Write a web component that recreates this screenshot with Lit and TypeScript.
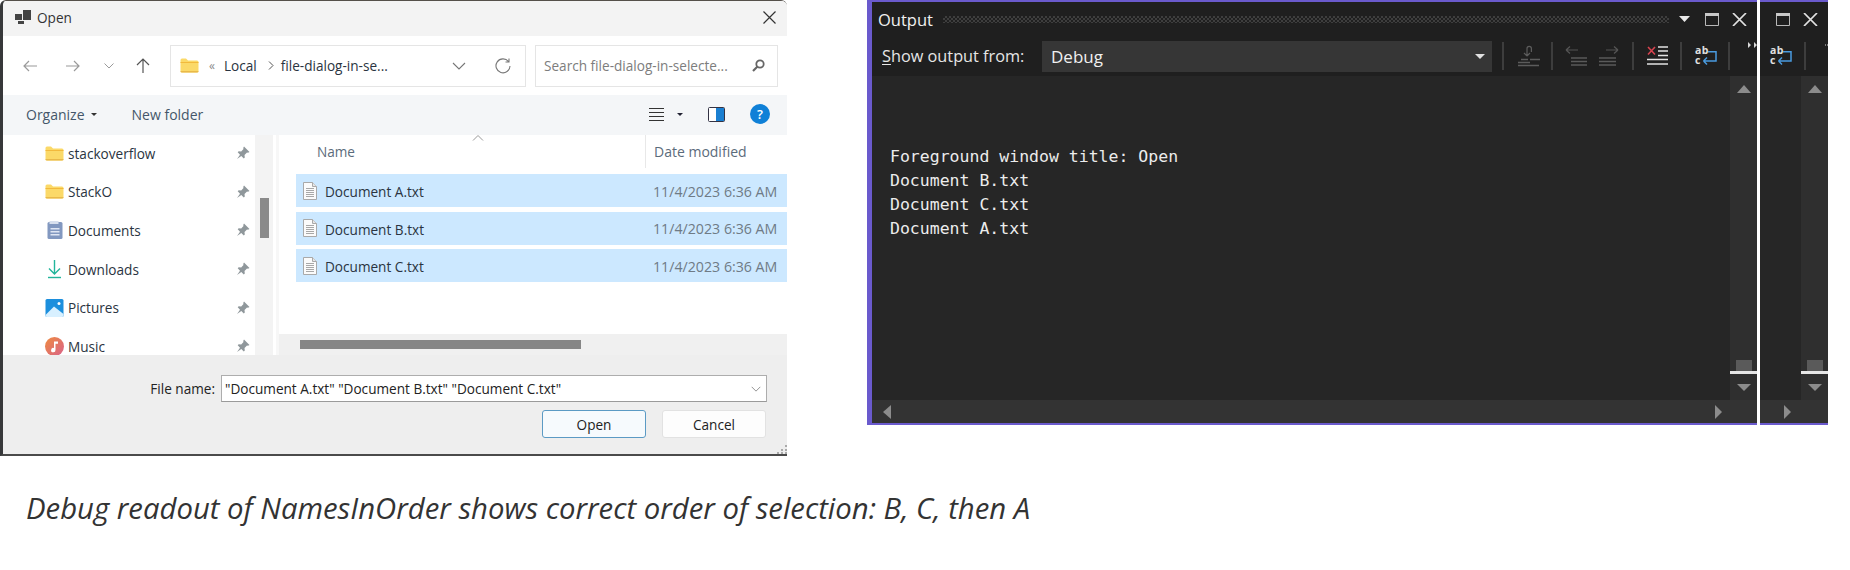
import { LitElement, html, css } from "lit";
import { customElement, property } from "lit/decorators.js";

const folder = html`<svg class="ic" width="18" height="15" viewBox="0 0 18 15"><path d="M0 2q0-1.500 1.500-1.500h4l2 2h9q1.500 0 1.500 1.500v9q0 1.500-1.500 1.500h-15q-1.500 0-1.500-1.500z" fill="#fbd968"/><path d="M0 4h18v1H0z" fill="#f2b93c"/><path d="M0 13h18v.600q0 1-1.500 1h-15q-1.500 0-1.500-1z" fill="#e9b94a"/></svg>`;
const pin = html`<svg class="pin" width="14" height="14" viewBox="0 0 14 14"><path d="M8 .5l5.500 5.500-1.500.800-1 -.300-2.500 2.500.300 2.500-1 1-2.500-2.500L1 13l3-4.300L1.700 6.200l1-1 2.500.300L7.500 3 7.200 2z" fill="#8f979b"/></svg>`;
const docs = html`<svg class="ic" width="18" height="18" viewBox="0 0 18 18"><rect x="2" y="1" width="15" height="17" rx="1.500" fill="#8298c0"/><rect x="4" y="0" width="9" height="3" fill="#d8e0ee"/><path d="M5 7h9v1.500H5zM5 10h9v1.500H5zM5 13h9v1.500H5z" fill="#dfe6f3"/></svg>`;
const down = html`<svg class="ic" width="18" height="20" viewBox="0 0 18 20"><path d="M9 1v14M3.500 9.500L9 15l5.500-5.500" fill="none" stroke="#22b59b" stroke-width="1.400"/><path d="M2.500 18.500h13" stroke="#22b59b" stroke-width="1.400"/></svg>`;
const pics = html`<svg class="ic" width="18" height="18" viewBox="0 0 18 18"><rect width="18" height="18" rx="1.500" fill="#1c8fdd"/><path d="M0 16l8.500-8.500L18 15v1.500q0 1.500-1.500 1.500h-15Q0 18 0 16.500z" fill="#d8f0ff"/><circle cx="13.500" cy="4.500" r="1.500" fill="#fff"/></svg>`;
const music = html`<svg class="ic" width="19" height="19" viewBox="0 0 19 19"><defs><linearGradient id="mg" x1="0" y1="0" x2="1" y2="1"><stop offset="0" stop-color="#ee8b3f"/><stop offset="1" stop-color="#d9628a"/></linearGradient></defs><circle cx="9.500" cy="9.500" r="9.500" fill="url(#mg)"/><path d="M9 4.500h4v2.300h-2.500v6.200a2.200 2.200 0 1 1-1.500-2z" fill="#fff"/></svg>`;
const doc = html`<svg class="fi" width="14" height="18" viewBox="0 0 14 18"><path d="M.5.500h9l4 4v13H.5z" fill="#fbfbfb" stroke="#a9a9a9"/><path d="M9.500.500v4h4" fill="#e6e6e6" stroke="#a9a9a9"/><path d="M3 6.500h8M3 8.500h8M3 10.500h8M3 12.500h8M3 14.500h8" stroke="#a8a8a8"/></svg>`;
const chev = (c = "#8a8a8a", w = 14) => html`<svg width="${w}" height="8" viewBox="0 0 14 8"><path d="M1 1l6 6 6-6" fill="none" stroke="${c}" stroke-width="1.100"/></svg>`;
const tri = (c: string, w: number, h: number, d: "u" | "d" | "l" | "r") => {
  const p = d === "u" ? `M0 ${h}L${w / 2} 0L${w} ${h}z` : d === "d" ? `M0 0L${w} 0L${w / 2} ${h}z` : d === "l" ? `M${w} 0V${h}L0 ${h / 2}z` : `M0 0V${h}L${w} ${h / 2}z`;
  return html`<svg width="${w}" height="${h}" viewBox="0 0 ${w} ${h}"><path d="${p}" fill="${c}"/></svg>`;
};
const winMax = html`<svg width="14" height="13" viewBox="0 0 14 13"><path d="M.5.500h13v12H.5z" fill="none" stroke="#b8b8b8"/><path d="M0 0h14v3H0z" fill="#c8c8c8"/></svg>`;
const winX = html`<svg width="15" height="13" viewBox="0 0 15 13"><path d="M1 0l13 13M14 0L1 13" stroke="#e2e2e2" stroke-width="1.700"/></svg>`;
const wrapIc = html`<svg width="24" height="22" viewBox="0 0 24 22"><path d="M4 14.500h7M13 14.500h10" stroke="#5c5c5c" stroke-width="1.300"/><path d="M10 11V3.500a2.200 2.200 0 0 1 4.400 0V7M10 11l-3-3M10 11l3-3" fill="none" stroke="#5c5c5c" stroke-width="1.200"/><path d="M1 17.500h12M1 20.500h21" stroke="#5c5c5c" stroke-width="1.700"/></svg>`;
const goL = html`<svg width="22" height="20" viewBox="0 0 22 20"><path d="M1 4h12M1 4l4-3.500M1 4l4 3.500" fill="none" stroke="#555" stroke-width="1.200"/><path d="M6 12h16M6 15.500h16M6 19h16" stroke="#5a5a5a" stroke-width="1.700"/></svg>`;
const goR = html`<svg width="20" height="20" viewBox="0 0 20 20"><path d="M7 4h12M19 4l-4-3.500M19 4l-4 3.500" fill="none" stroke="#555" stroke-width="1.200"/><path d="M0 12h17M0 15.500h17M0 19h17" stroke="#5a5a5a" stroke-width="1.700"/></svg>`;
const clearIc = html`<svg width="22" height="21" viewBox="0 0 22 21"><path d="M1 1l7 7.500M8 1L1 8.500" stroke="#d8434f" stroke-width="1.600"/><path d="M11 1h10M11 5h10M11 9.500h10M0 13.500h21M0 18h21" stroke="#e2e2e2" stroke-width="1.500"/></svg>`;
const abcIc = html`<svg class="abc" width="23" height="22" viewBox="0 0 23 22"><text font-family="Open Sans" font-size="10.500" font-weight="700" letter-spacing=".5" fill="#e0e0e0"><tspan x="0" y="9.300">ab</tspan><tspan x="0" y="18.600">c</tspan></text><path d="M13 6.700h8v9.300H8.500M8.500 16l3.500-3.500M8.500 16l3.500 3.500" fill="none" stroke="#4a9bdf" stroke-width="1.500"/></svg>`;
const more = html`<svg class="more" width="9" height="6" viewBox="0 0 9 6"><path d="M0 0v6l3-3zM6 0v6l3-3z" fill="#d8d8d8"/></svg>`;

@customElement("output-panel")
class OutputPanel extends LitElement {
  @property({ type: Boolean }) stub = false;
  static styles = css`
    :host { display: flex; flex-direction: column; box-sizing: border-box; height: 425px; background: #1f1f1f; border-top: 2px solid #6a5acd; border-bottom: 2px solid #6a5acd; color: #f0f0f0; font-family: "Open Sans", sans-serif; flex: none; }
    .abc { overflow: visible; }
    .title { height: 34px; flex: none; display: flex; align-items: center; padding: 0 10px 0 6px; box-sizing: border-box; }
    .name { font-size: 16.500px; margin-right: 10px; }
    .grip { flex: 1; height: 7px; background-image: conic-gradient(#3e3e3e 25%, transparent 0 50%, #3e3e3e 0 75%, transparent 0); background-size: 4px 4px; margin-right: 10px; }
    .cap { margin-right: 15px; display: flex; }
    .max { margin-right: 13px; display: flex; }
    .x { display: flex; }
    .tools { height: 40px; flex: none; display: flex; align-items: center; box-sizing: border-box; padding-left: 10px; }
    .lab { font-size: 16.300px; width: 160px; flex: none; color: #e6e6e6; }
    .lab u { text-underline-offset: 2px; }
    .sel { width: 450px; height: 31px; flex: none; background: #363636; display: flex; align-items: center; justify-content: space-between; padding: 0 7px 0 9px; box-sizing: border-box; font-size: 17px; margin-right: 10px; }
    .sep { width: 2px; height: 28px; background: #3d3d3d; flex: none; }
    .t { display: flex; align-items: center; flex: none; }
    .more { align-self: flex-start; margin-top: 6px; }
    .main { flex: 1; display: flex; min-height: 0; }
    .text { flex: 1; background: #262626; font: 16.500px/24.100px "DejaVu Sans Mono", monospace; padding: 69px 0 0 18px; white-space: pre; color: #ececec; overflow: hidden; }
    .vs { width: 27px; flex: none; background: #2f2f2f; display: flex; flex-direction: column; align-items: center; }
    .vs .up { margin-top: 9px; display: flex; }
    .vs .thumb { margin-top: auto; width: 16px; height: 11px; background: #5a5a5a; }
    .vs .line { width: 100%; height: 3px; background: #e6e6e6; }
    .vs .dn { margin: 10px 0 9px; display: flex; }
    .hs { height: 23px; flex: none; background: #333; display: flex; align-items: center; justify-content: space-between; padding: 0 35px 0 11px; }
  `;
  render() {
    if (this.stub)
      return html`
        <div class="title"><span style="flex:1"></span><span class="max">${winMax}</span><span class="x">${winX}</span></div>
        <div class="tools"><span class="t" style="margin-right:11px">${abcIc}</span><span class="sep" style="margin-right:19px"></span>${more}</div>
        <div class="main"><div class="text" style="padding:0"></div>${this.bar()}</div>
        <div class="hs" style="padding-left:0;padding-right:37px;justify-content:flex-end">${tri("#8c8c8c", 7, 14, "r")}</div>`;
    return html`
      <div class="title"><span class="name">Output</span><span class="grip"></span><span class="cap">${tri("#e8e8e8", 11, 6, "d")}</span><span class="max">${winMax}</span><span class="x">${winX}</span></div>
      <div class="tools">
        <span class="lab"><u>S</u>how output from:</span>
        <div class="sel"><span>Debug</span>${tri("#e0e0e0", 10, 5, "d")}</div>
        <span class="sep" style="margin-right:13px"></span><span class="t" style="margin-right:10px">${wrapIc}</span>
        <span class="sep" style="margin-right:12px"></span><span class="t" style="margin-right:12px">${goL}</span><span class="t" style="margin-right:13px">${goR}</span>
        <span class="sep" style="margin-right:13px"></span><span class="t" style="margin-right:11px">${clearIc}</span>
        <span class="sep" style="margin-right:13px"></span><span class="t" style="margin-right:10px">${abcIc}</span>
        <span class="sep" style="margin-right:18px"></span>${more}
      </div>
      <div class="main"><div class="text">Foreground window title: Open
Document B.txt
Document C.txt
Document A.txt</div>${this.bar()}</div>
      <div class="hs">${tri("#8c8c8c", 8, 14, "l")}${tri("#8c8c8c", 7, 14, "r")}</div>`;
  }
  bar() {
    return html`<div class="vs"><span class="up">${tri("#8c8c8c", 14, 8, "u")}</span><span class="thumb"></span><span class="line"></span><span class="dn">${tri("#8c8c8c", 14, 7, "d")}</span></div>`;
  }
}

@customElement("open-dialog")
class OpenDialog extends LitElement {
  static styles = css`
    :host { display: flex; flex-direction: column; width: 787px; height: 456px; box-sizing: border-box; flex: none; border-left: 3px solid #37383a; border-top: 1px solid #55504a; border-bottom: 2px solid #4a4a4a; background: #fff; font-family: "Open Sans", sans-serif; color: #2a3441; font-size: 13.600px; overflow: hidden; border-top-left-radius: 6px; border-top-right-radius: 6px; }
    svg { flex: none; }
    .title { height: 35px; background: #f3f3f3; display: flex; align-items: center; padding: 0 11px 3px 12px; flex: none; color: #333; box-sizing: border-box; }
    .title span { flex: 1; margin-left: 6px; }
    .nav { height: 59px; display: flex; align-items: center; flex: none; box-sizing: border-box; padding-left: 20px; }
    .box { height: 42px; box-sizing: border-box; border: 1px solid #e5e5e5; display: flex; align-items: center; background: #fff; }
    .addr { width: 356px; margin: 0 9px 0 20px; padding: 0 14px 0 9px; }
    .search { width: 243px; padding: 0 12px 0 8px; color: #7d7d7d; justify-content: space-between; }
    .tb { height: 40px; flex: none; background: #f4f6f8; display: flex; align-items: center; color: #44566a; padding: 0 17px 2px 23px; box-sizing: border-box; font-size: 14px; }
    .body { height: 220px; display: flex; flex: none; overflow: hidden; }
    .side { width: 252px; flex: none; overflow: hidden; box-sizing: border-box; padding: 0 5px 0 43px; }
    .nr { height: 38.600px; display: flex; align-items: center; position: relative; top: -1px; }
    .ic { width: 19px; margin-right: 3px; }
    .nr span { flex: 1; }
    .sb { width: 18px; flex: none; background: #f3f3f3; box-sizing: border-box; padding: 63px 4px 0 5px; }
    .sb div { height: 40px; background: #8a8a8a; }
    .gut { width: 3px; flex: none; background: #fff; border-right: 3px solid #f7f7f7; }
    .files { flex: 1; display: flex; flex-direction: column; min-width: 0; }
    .hd { height: 39px; flex: none; display: flex; color: #5b6b7b; }
    .hname { width: 367px; flex: none; box-sizing: border-box; padding: 7px 0 0 38px; border-right: 1px solid #e8e8e8; display: flex; height: 33px; }
    .hname svg { margin: -7px 161px 0 auto; }
    .hdate { padding: 7px 0 0 8px; font-size: 14px; }
    .row { height: 33px; margin: 0 0 4.700px 17px; background: #cce8ff; display: flex; align-items: center; flex: none; box-sizing: border-box; padding-left: 7px; }
    .fi { margin-right: 8px; }
    .row .n { width: 328px; flex: none; padding-top: 2px; }
    .row .d { color: #6f7b86; font-size: 14.200px; padding-top: 1px; }
    .hb { margin-top: auto; height: 21px; background: #f0f0f0; flex: none; box-sizing: border-box; padding: 6px 0 0 21px; }
    .hb div { width: 281px; height: 9px; background: #868686; }
    .foot { flex: 1; background: #eee; display: flex; flex-direction: column; align-items: flex-end; box-sizing: border-box; padding: 20px 20px 0 0; color: #222; position: relative; }
    .fn { display: flex; align-items: center; gap: 6px; }
    .input { width: 546px; height: 27px; box-sizing: border-box; background: #fff; border: 1px solid #adadad; border-bottom-color: #9a9a9a; display: flex; align-items: center; justify-content: space-between; padding: 0 5px 0 3px; }
    .btns { display: flex; gap: 16px; margin-top: 8px; margin-right: 1px; }
    .btn { width: 104px; height: 28px; box-sizing: border-box; border-radius: 3px; background: #fdfdfd; border: 1px solid #e2e2e2; display: flex; align-items: center; justify-content: center; }
    .pri { border-color: #5b9ac4; background: #f6fafd; }
    .grip { position: absolute; right: 0; bottom: 0; }
  `;
  render() {
    const navRows: [unknown, string][] = [[folder, "stackoverflow"], [folder, "StackO"], [docs, "Documents"], [down, "Downloads"], [pics, "Pictures"], [music, "Music"]];
    return html`
      <div class="title">
        <svg width="16" height="14" viewBox="0 0 16 14"><path d="M0 4h7v6H0zM8 0h8v10H8zM3 11h6v3H3z" fill="#444"/></svg>
        <span>Open</span>
        <svg width="13" height="13" viewBox="0 0 13 13"><path d="M.5.500l12 12M12.500.500l-12 12" stroke="#333" stroke-width="1.200"/></svg>
      </div>
      <div class="nav">
        <svg width="14" height="12" viewBox="0 0 14 12" style="margin-right:29px"><path d="M14 6H1M6 1L1 6l5 5" fill="none" stroke="#9a9a9a" stroke-width="1.200"/></svg>
        <svg width="14" height="12" viewBox="0 0 14 12" style="margin-right:24px"><path d="M0 6h13M8 1l5 5-5 5" fill="none" stroke="#9a9a9a" stroke-width="1.200"/></svg>
        <span style="display:flex;margin-right:22px"><svg width="10" height="6" viewBox="0 0 10 6"><path d="M.5.500L5 5 9.500.500" fill="none" stroke="#9a9a9a"/></svg></span>
        <svg width="14" height="15" viewBox="0 0 14 15"><path d="M7 15V1M1 7l6-6 6 6" fill="none" stroke="#555" stroke-width="1.200"/></svg>
        <div class="box addr">
          ${folder}
          <span style="margin-left:7px;color:#8a8a8a;font-size:12px">«</span>
          <span style="margin-left:9px">Local</span>
          <svg width="6" height="9" viewBox="0 0 6 9" style="margin:0 7px 0 11px"><path d="M1 .500l4 4-4 4" fill="none" stroke="#555"/></svg>
          <span style="flex:1">file-dialog-in-se...</span>
          ${chev("#777")}
          <svg width="16" height="16" viewBox="0 0 16 16" style="margin-left:29px"><path d="M13.500 3.500A7 7 0 1 0 15 8M14 .5v3.500h-3.500" fill="none" stroke="#777" stroke-width="1.100"/></svg>
        </div>
        <div class="box search">
          <span>Search file-dialog-in-selecte...</span>
          <svg width="13" height="13" viewBox="0 0 13 13"><circle cx="8" cy="5" r="3.700" fill="none" stroke="#666" stroke-width="1.800"/><path d="M5.500 7.500L1 12" stroke="#666" stroke-width="2.200"/></svg>
        </div>
      </div>
      <div class="tb">
        <span>Organize</span>
        <svg width="6" height="3" viewBox="0 0 6 3" style="margin:0 35px 0 6px"><path d="M0 0h6L3 3z" fill="#333"/></svg>
        <span style="flex:1">New folder</span>
        <svg width="15" height="13" viewBox="0 0 15 13" style="margin-right:13px"><path d="M0 .500h15M0 4.500h15M0 8.500h15M0 12.500h15" stroke="#333"/></svg>
        <svg width="6" height="3" viewBox="0 0 6 3" style="margin-right:25px"><path d="M0 0h6L3 3z" fill="#223"/></svg>
        <svg width="17" height="15" viewBox="0 0 17 15" style="margin-right:25px"><rect x=".5" y=".5" width="16" height="14" rx="1" fill="#fff" stroke="#334"/><rect x="8" y="1" width="8" height="13" fill="#1a7fd1"/></svg>
        <svg width="20" height="20" viewBox="0 0 20 20"><circle cx="10" cy="10" r="10" fill="#0f80d7"/><text x="10" y="14.500" font-size="13" font-family="Open Sans" font-weight="600" text-anchor="middle" fill="#fff">?</text></svg>
      </div>
      <div class="body">
        <div class="side">
          ${navRows.map(([i, t]) => html`<div class="nr"><span class="ic" style="flex:none;display:flex;justify-content:center">${i}</span><span>${t}</span>${pin}</div>`)}
        </div>
        <div class="sb"><div></div></div>
        <div class="gut"></div>
        <div class="files">
          <div class="hd">
            <div class="hname"><span>Name</span><svg width="12" height="6" viewBox="0 0 12 6"><path d="M1 5.500l5-5 5 5" fill="none" stroke="#999"/></svg></div>
            <div class="hdate">Date modified</div>
          </div>
          ${["A", "B", "C"].map((l) => html`<div class="row">${doc}<span class="n">Document ${l}.txt</span><span class="d">11/4/2023 6:36 AM</span></div>`)}
          <div class="hb"><div></div></div>
        </div>
      </div>
      <div class="foot">
        <div class="fn"><span>File name:</span><div class="input"><span>"Document A.txt" "Document B.txt" "Document C.txt"</span>${chev("#777", 10)}</div></div>
        <div class="btns"><div class="btn pri">Open</div><div class="btn">Cancel</div></div>
        <svg class="grip" width="10" height="10" viewBox="0 0 10 10"><path d="M8 1h2v2H8zM4 5h2v2H4zM8 5h2v2H8zM0 8h2v2H0zM4 8h2v2H4zM8 8h2v2H8z" fill="#aaa"/></svg>
      </div>`;
  }
}

@customElement("app-root")
class AppRoot extends LitElement {
  static styles = css`
    :host { display: block; width: 1850px; height: 570px; background: #fff; overflow: hidden; }
    .top { display: flex; align-items: flex-start; }
    .p1 { width: 890px; margin-left: 80px; border-left: 5px solid #6a5acd; }
    .p2 { width: 68px; margin-left: 3px; }
    .cap { font: italic 29.300px "Open Sans", sans-serif; color: #333; margin: 32px 0 0 26px; white-space: nowrap; }
  `;
  render() {
    return html`
      <div class="top">
        <open-dialog></open-dialog>
        <output-panel class="p1"></output-panel>
        <output-panel class="p2" stub></output-panel>
      </div>
      <div class="cap">Debug readout of NamesInOrder shows correct order of selection: B, C, then A</div>`;
  }
}
void OutputPanel; void OpenDialog; void AppRoot;
